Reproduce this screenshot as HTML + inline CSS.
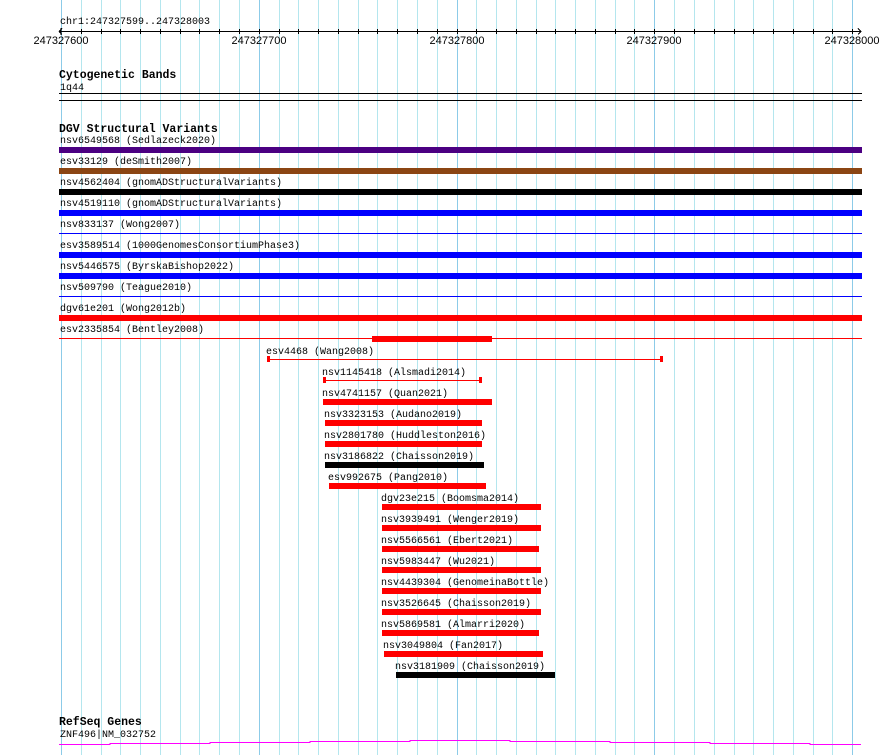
<!DOCTYPE html>
<html><head><meta charset="utf-8"><style>
html,body{margin:0;padding:0;background:#fff;width:890px;height:755px;overflow:hidden}
svg{display:block}
text{font-family:"Liberation Mono",monospace;font-size:10px;fill:#000}
.b{font-weight:bold;font-size:11.5px}
</style></head><body>
<svg width="890" height="755" xmlns="http://www.w3.org/2000/svg" shape-rendering="crispEdges">
<g stroke="#b4e6ee" stroke-width="1">
<path d="M81.5 0V755M101.5 0V755M120.5 0V755M140.5 0V755M160.5 0V755M180.5 0V755M199.5 0V755M219.5 0V755M239.5 0V755M279.5 0V755M298.5 0V755M318.5 0V755M338.5 0V755M358.5 0V755M377.5 0V755M397.5 0V755M417.5 0V755M437.5 0V755M476.5 0V755M496.5 0V755M516.5 0V755M536.5 0V755M555.5 0V755M575.5 0V755M595.5 0V755M615.5 0V755M634.5 0V755M674.5 0V755M694.5 0V755M714.5 0V755M734.5 0V755M753.5 0V755M773.5 0V755M793.5 0V755M813.5 0V755M832.5 0V755"/>
</g>
<g stroke="#8ccbe8" stroke-width="1">
<path d="M61.5 0V755M259.5 0V755M457.5 0V755M654.5 0V755M852.5 0V755"/>
</g>
<!-- ruler -->
<text x="60" y="24">chr1:247327599..247328003</text>
<g stroke="#000" stroke-width="1" fill="none">
<path d="M59 31.5H861M61 28V35M59 31.5L62 28.5M59 31.5L62 34.5M858 28.5L861 31.5L858 34.5"/>
<path d="M81.5 29V34M101.5 29V34M120.5 29V34M140.5 29V34M160.5 29V34M180.5 29V34M199.5 29V34M219.5 29V34M239.5 29V34M259.5 29V34M279.5 29V34M298.5 29V34M318.5 29V34M338.5 29V34M358.5 29V34M377.5 29V34M397.5 29V34M417.5 29V34M437.5 29V34M457.5 29V34M476.5 29V34M496.5 29V34M516.5 29V34M536.5 29V34M555.5 29V34M575.5 29V34M595.5 29V34M615.5 29V34M634.5 29V34M654.5 29V34M674.5 29V34M694.5 29V34M714.5 29V34M734.5 29V34M753.5 29V34M773.5 29V34M793.5 29V34M813.5 29V34M832.5 29V34M852.5 29V34"/>
</g>
<text x="61" y="44" text-anchor="middle" style="font-family:'Liberation Sans',sans-serif;font-size:11px">247327600</text>
<text x="259" y="44" text-anchor="middle" style="font-family:'Liberation Sans',sans-serif;font-size:11px">247327700</text>
<text x="457" y="44" text-anchor="middle" style="font-family:'Liberation Sans',sans-serif;font-size:11px">247327800</text>
<text x="654" y="44" text-anchor="middle" style="font-family:'Liberation Sans',sans-serif;font-size:11px">247327900</text>
<text x="852" y="44" text-anchor="middle" style="font-family:'Liberation Sans',sans-serif;font-size:11px">247328000</text>
<!-- cytobands -->
<text class="b" x="59" y="78">Cytogenetic Bands</text>
<text x="60" y="90">1q44</text>
<rect x="59" y="93" width="803" height="1" fill="#000"/>
<rect x="59" y="100" width="803" height="1" fill="#000"/>
<!-- DGV -->
<text class="b" x="59" y="132">DGV Structural Variants</text>
<text x="60" y="143">nsv6549568 (Sedlazeck2020)</text>
<rect x="59" y="147" width="803" height="6" fill="#4b0082"/>
<text x="60" y="164">esv33129 (deSmith2007)</text>
<rect x="59" y="168" width="803" height="6" fill="#8b4513"/>
<text x="60" y="185">nsv4562404 (gnomADStructuralVariants)</text>
<rect x="59" y="189" width="803" height="6" fill="#000"/>
<text x="60" y="206">nsv4519110 (gnomADStructuralVariants)</text>
<rect x="59" y="210" width="803" height="6" fill="#0000ff"/>
<text x="60" y="227">nsv833137 (Wong2007)</text>
<rect x="59" y="233" width="803" height="1" fill="#0000ff"/>
<text x="60" y="248">esv3589514 (1000GenomesConsortiumPhase3)</text>
<rect x="59" y="252" width="803" height="6" fill="#0000ff"/>
<text x="60" y="269">nsv5446575 (ByrskaBishop2022)</text>
<rect x="59" y="273" width="803" height="6" fill="#0000ff"/>
<text x="60" y="290">nsv509790 (Teague2010)</text>
<rect x="59" y="296" width="803" height="1" fill="#0000ff"/>
<text x="60" y="311">dgv61e201 (Wong2012b)</text>
<rect x="59" y="315" width="803" height="6" fill="#ff0000"/>
<text x="60" y="332">esv2335854 (Bentley2008)</text>
<rect x="59" y="338" width="803" height="1" fill="#ff0000"/>
<rect x="372" y="336" width="120" height="6" fill="#ff0000"/>

<text x="266" y="354">esv4468 (Wang2008)</text>
<rect x="268" y="359" width="394" height="1" fill="#ff0000"/>
<rect x="267" y="356" width="3" height="6" fill="#ff0000"/>
<rect x="660" y="356" width="3" height="6" fill="#ff0000"/>
<text x="322" y="375">nsv1145418 (Alsmadi2014)</text>
<rect x="323" y="380" width="158" height="1" fill="#ff0000"/>
<rect x="323" y="377" width="3" height="6" fill="#ff0000"/>
<rect x="479" y="377" width="3" height="6" fill="#ff0000"/>
<text x="322" y="396">nsv4741157 (Quan2021)</text>
<rect x="323" y="399" width="169" height="6" fill="#ff0000"/>
<text x="324" y="417">nsv3323153 (Audano2019)</text>
<rect x="325" y="420" width="157" height="6" fill="#ff0000"/>
<text x="324" y="438">nsv2801780 (Huddleston2016)</text>
<rect x="325" y="441" width="157" height="6" fill="#ff0000"/>
<text x="324" y="459">nsv3186822 (Chaisson2019)</text>
<rect x="325" y="462" width="159" height="6" fill="#000"/>
<text x="328" y="480">esv992675 (Pang2010)</text>
<rect x="329" y="483" width="157" height="6" fill="#ff0000"/>
<text x="381" y="501">dgv23e215 (Boomsma2014)</text>
<rect x="382" y="504" width="159" height="6" fill="#ff0000"/>
<text x="381" y="522">nsv3939491 (Wenger2019)</text>
<rect x="382" y="525" width="159" height="6" fill="#ff0000"/>
<text x="381" y="543">nsv5566561 (Ebert2021)</text>
<rect x="382" y="546" width="157" height="6" fill="#ff0000"/>
<text x="381" y="564">nsv5983447 (Wu2021)</text>
<rect x="382" y="567" width="159" height="6" fill="#ff0000"/>
<text x="381" y="585">nsv4439304 (GenomeinaBottle)</text>
<rect x="382" y="588" width="159" height="6" fill="#ff0000"/>
<text x="381" y="606">nsv3526645 (Chaisson2019)</text>
<rect x="382" y="609" width="159" height="6" fill="#ff0000"/>
<text x="381" y="627">nsv5869581 (Almarri2020)</text>
<rect x="382" y="630" width="157" height="6" fill="#ff0000"/>
<text x="383" y="648">nsv3049804 (Fan2017)</text>
<rect x="384" y="651" width="159" height="6" fill="#ff0000"/>
<text x="395" y="669">nsv3181909 (Chaisson2019)</text>
<rect x="396" y="672" width="159" height="6" fill="#000"/>
<!-- RefSeq -->
<text class="b" x="59" y="725">RefSeq Genes</text>
<text x="60" y="737">ZNF496|NM_032752</text>
<path fill="none" stroke="#ff00ff" stroke-width="1" d="M59 744.5H110V743.5H210V742.5H310V741.5H410V740.5H510V741.5H610V742.5H710V743.5H810V744.5H861"/>
</svg>
</body></html>
